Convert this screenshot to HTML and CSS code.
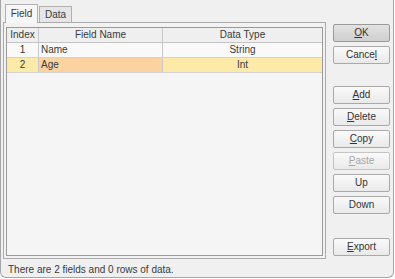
FILE: index.html
```html
<!DOCTYPE html>
<html>
<head>
<meta charset="utf-8">
<link rel="stylesheet" href="styles.css">
</head>
<body>
<div class="window">
  <div class="main">
    <div class="left">
      <div class="tabs">
        <div class="tab active">Field</div>
        <div class="tab">Data</div>
      </div>
      <div class="panel">
        <div class="table">
          <div class="row head">
            <div class="c c1">Index</div>
            <div class="c c2 center">Field Name</div>
            <div class="c c3">Data Type</div>
          </div>
          <div class="row">
            <div class="c c1">1</div>
            <div class="c c2">Name</div>
            <div class="c c3">String</div>
          </div>
          <div class="row sel">
            <div class="c c1">2</div>
            <div class="c c2 focus">Age</div>
            <div class="c c3">Int</div>
          </div>
        </div>
      </div>
    </div>
    <div class="buttons">
      <div class="btn default"><u>O</u>K</div>
      <div class="btn">Cance<u>l</u></div>
      <div class="btn g1"><u>A</u>dd</div>
      <div class="btn"><u>D</u>elete</div>
      <div class="btn"><u>C</u>opy</div>
      <div class="btn disabled"><u>P</u>aste</div>
      <div class="btn">Up</div>
      <div class="btn">Down</div>
      <div class="btn g2"><u>E</u>xport</div>
    </div>
  </div>
  <div class="status">There are 2 fields and 0 rows of data.</div>
</div>
</body>
</html>
```
FILE: styles.css
```css
html, body {
  margin: 0;
  padding: 0;
  background: #ffffff;
}
body {
  font-family: "Liberation Sans", Arial, sans-serif;
  font-size: 10px;
  color: #3a3a3a;
}
.window {
  box-sizing: border-box;
  width: 394px;
  height: 278px;
  background: #f0f0f0;
  border: 1px solid #a6a6a6;
  border-top: none;
  border-radius: 0 0 6px 6px;
  padding: 4px 0 0 2px;
  display: flex;
  flex-direction: column;
}
.main {
  display: flex;
  gap: 7px;
}
.left {
  display: flex;
  flex-direction: column;
  width: 323px;
}
.tabs {
  display: flex;
  padding-left: 2px;
  height: 18px;
  align-items: flex-end;
  gap: 1px;
}
.tab {
  box-sizing: border-box;
  width: 33px;
  height: 16px;
  text-align: center;
  line-height: 15px;
  border: 1px solid #b0b0b0;
  border-bottom: none;
  background: #e6e6e6;
  color: #3a3a3a;
}
.tab.active {
  line-height: 18px;
  background: #f7f7f7;
  position: relative;
  z-index: 1;
  margin-bottom: -1px;
  height: 19px;
}
.panel {
  box-sizing: border-box;
  height: 237px;
  border: 1px solid #aaaaaa;
  background: #f2f2f2;
  padding: 4px 2px 2px 2px;
}
.table {
  box-sizing: border-box;
  height: 229px;
  border: 1px solid #9a9a9a;
  background: #f5f5f5;
}
.row {
  display: flex;
  height: 14px;
  border-bottom: 1px solid #d2d2d2;
  background: #f9f9f9;
}
.row.head {
  background: #efefef;
  height: 14px;
  border-bottom: 1px solid #c4c4c4;
}
.c {
  box-sizing: border-box;
  line-height: 14px;
  border-right: 1px solid #c8c8c8;
  white-space: nowrap;
  overflow: hidden;
}
.c1 {
  width: 32px;
  text-align: center;
}
.c2 {
  width: 124px;
  padding-left: 2px;
}
.c2.center {
  text-align: center;
  padding-left: 0;
}
.c3 {
  flex: 1;
  text-align: center;
  border-right: none;
}
.row.sel {
  background: #fde9a8;
}
.c.focus {
  background: #fcd3a0;
}
.buttons {
  display: flex;
  flex-direction: column;
  width: 57px;
  padding-top: 20px;
  gap: 4px;
}
.btn {
  box-sizing: border-box;
  height: 18px;
  line-height: 16px;
  text-align: center;
  border: 1px solid #a9a9a9;
  border-radius: 2px;
  background: linear-gradient(#fafafa, #e9e9e9);
  color: #333;
}
.btn.default {
  background: linear-gradient(#e2e2e2, #cfcfcf);
  border-color: #9a9a9a;
}
.btn.disabled {
  color: #a6a6a6;
  border-color: #c4c4c4;
}
.btn.g1 {
  margin-top: 18px;
}
.btn.g2 {
  margin-top: 20px;
}
.status {
  padding: 5px 0 0 5px;
}
```
